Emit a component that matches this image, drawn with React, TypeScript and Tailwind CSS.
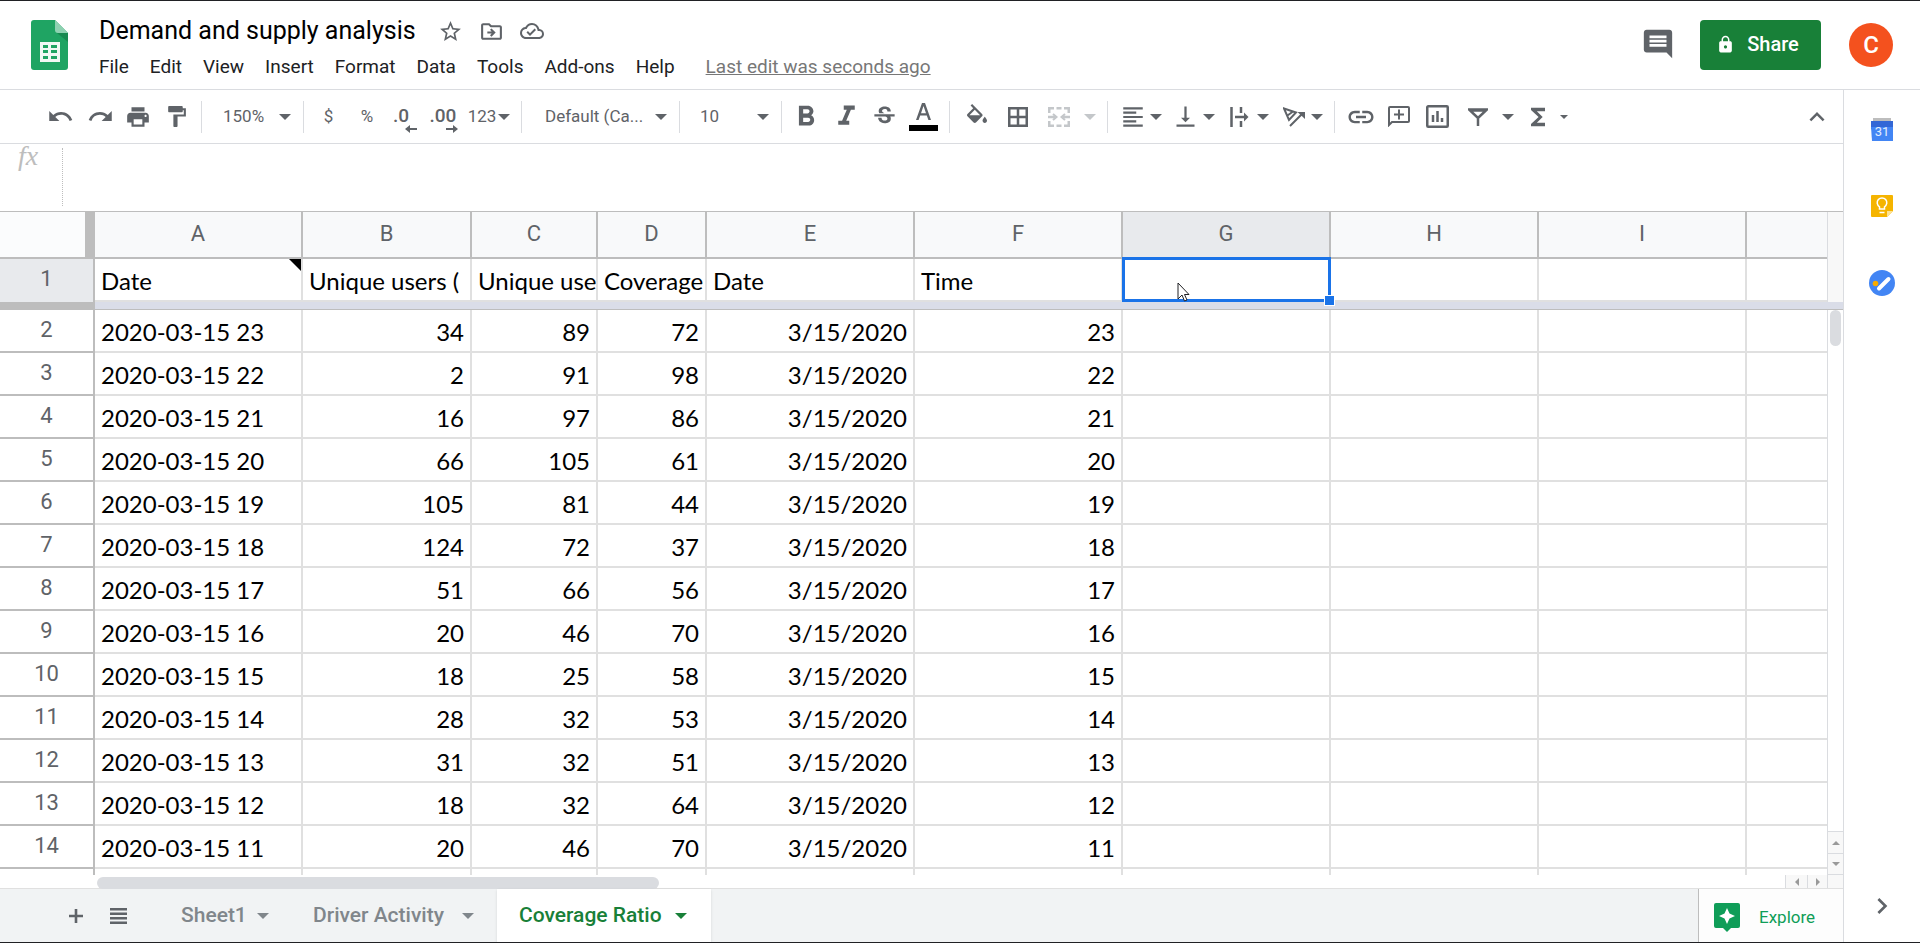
import { ReactNode } from "react";
import {
  MdChevronRight,
  MdComment,
  MdFormatAlignLeft,
  MdFormatBold,
  MdFormatItalic,
  MdFormatPaint,
  MdFunctions,
  MdKeyboardArrowUp,
  MdLink,
  MdLock,
  MdOutlineCloudDone,
  MdOutlineDriveFileMove,
  MdPrint,
  MdRedo,
  MdStarBorder,
  MdStrikethroughS,
  MdUndo,
  MdVerticalAlignBottom,
} from "react-icons/md";

const menus = ["File", "Edit", "View", "Insert", "Format", "Data", "Tools", "Add-ons", "Help"];

const columns = ["A", "B", "C", "D", "E", "F", "G", "H", "I", ""];

const headings = ["Date", "Unique users (", "Unique use", "Coverage", "Date", "Time"];

const rows = [
  ["2020-03-15 23", "34", "89", "72", "3/15/2020", "23"],
  ["2020-03-15 22", "2", "91", "98", "3/15/2020", "22"],
  ["2020-03-15 21", "16", "97", "86", "3/15/2020", "21"],
  ["2020-03-15 20", "66", "105", "61", "3/15/2020", "20"],
  ["2020-03-15 19", "105", "81", "44", "3/15/2020", "19"],
  ["2020-03-15 18", "124", "72", "37", "3/15/2020", "18"],
  ["2020-03-15 17", "51", "66", "56", "3/15/2020", "17"],
  ["2020-03-15 16", "20", "46", "70", "3/15/2020", "16"],
  ["2020-03-15 15", "18", "25", "58", "3/15/2020", "15"],
  ["2020-03-15 14", "28", "32", "53", "3/15/2020", "14"],
  ["2020-03-15 13", "31", "32", "51", "3/15/2020", "13"],
  ["2020-03-15 12", "18", "32", "64", "3/15/2020", "12"],
  ["2020-03-15 11", "20", "46", "70", "3/15/2020", "11"],
];

function Caret({ small = false }: { small?: boolean }) {
  return (
    <svg width={small ? 8 : 12} height={small ? 4 : 6} viewBox="0 0 12 6" fill="currentColor" className="shrink-0">
      <path d="M0 0h12L6 6z" />
    </svg>
  );
}

function Tool({ label, className, children }: { label: string; className: string; children: ReactNode }) {
  return (
    <button aria-label={label} className={`flex h-9 shrink-0 items-center justify-center ${className}`}>
      {children}
    </button>
  );
}

function Separator() {
  return <div className="h-8 w-px shrink-0 bg-[#dadce0]" />;
}

function Picker({ label, value, className }: { label: string; value: string; className: string }) {
  return (
    <div className={`relative flex shrink-0 items-center ${className}`}>
      <select aria-label={label} className="h-9 w-full appearance-none truncate bg-transparent text-[17px] outline-none">
        <option>{value}</option>
      </select>
      <span className="pointer-events-none absolute right-3">
        <Caret />
      </span>
    </div>
  );
}

function Header() {
  return (
    <header className="flex h-[90px] shrink-0 items-start border-t border-b border-t-[#202124] border-b-[#dadce0]">
      <svg width="37" height="50" viewBox="0 0 37 50" className="mt-[19px] ml-[31px] shrink-0">
        <path d="M3 0h21l13 13v34a3 3 0 0 1-3 3H3a3 3 0 0 1-3-3V3a3 3 0 0 1 3-3z" fill="#1fa463" />
        <path d="M24 0l13 13H27a3 3 0 0 1-3-3z" fill="#8ed1b1" />
        <path d="M26 13h11v9z" fill="#188a51" />
        <path
          d="M9 22h20v20H9zm3 3v3h5v-3zm8 0v3h6v-3zm-8 5v3h5v-3zm8 0v3h6v-3zm-8 6v3h5v-3zm8 0v3h6v-3z"
          fill="#f1f8f4"
          fillRule="evenodd"
        />
      </svg>
      <div className="ml-[31px] flex grow flex-col">
        <div className="mt-3 flex h-9 items-center text-[#5f6368]">
          <input
            aria-label="Document title"
            defaultValue="Demand and supply analysis"
            className="h-9 w-[329px] text-[25px] text-black outline-none"
          />
          <button aria-label="Star" className="ml-2.5">
            <MdStarBorder size={25} />
          </button>
          <button aria-label="Move" className="ml-4">
            <MdOutlineDriveFileMove size={25} />
          </button>
          <button aria-label="Document status" className="ml-4">
            <MdOutlineCloudDone size={24} />
          </button>
        </div>
        <nav className="mt-0.5 flex h-8 items-center gap-[21px] text-[19px] text-[#202124]">
          {menus.map((menu) => (
            <button key={menu}>{menu}</button>
          ))}
          <a href="#" className="ml-2.5 text-[#777] underline">
            Last edit was seconds ago
          </a>
        </nav>
      </div>
      <button aria-label="Comments" className="mt-[26px] text-[#5f6368]">
        <MdComment size={34} />
      </button>
      <button className="mt-[19px] ml-[25px] flex h-[50px] w-[121px] items-center justify-center gap-3 rounded bg-[#188038] pr-1.5 pb-0.5 text-xl font-medium text-white">
        <MdLock size={19} />
        Share
      </button>
      <button className="mt-[22px] mr-[27px] ml-7 size-11 rounded-full bg-[#f4511e] text-2xl font-medium text-white">
        C
      </button>
    </header>
  );
}

function Toolbar() {
  return (
    <div className="flex h-[54px] shrink-0 items-center border-b border-[#dadce0] pl-10 text-[17px] text-[#5f6368]">
      <Tool label="Undo" className="w-10"><MdUndo size={27} /></Tool>
      <Tool label="Redo" className="w-10"><MdRedo size={27} /></Tool>
      <Tool label="Print" className="w-9"><MdPrint size={26} /></Tool>
      <Tool label="Paint format" className="mr-1 w-[41px]"><MdFormatPaint size={25} /></Tool>
      <Separator />
      <Picker label="Zoom" value="150%" className="ml-[21px] w-20" />
      <Separator />
      <Tool label="Currency" className="ml-2 w-[33px]">$</Tool>
      <Tool label="Percent" className="w-11">%</Tool>
      <Tool label="Decrease decimals" className="w-8 pr-2">
        <span className="relative text-[19px] font-medium">
          .0
          <svg width="12" height="8" viewBox="0 0 12 8" fill="currentColor" className="absolute -right-2 -bottom-0.5">
            <path d="M0 4l5-4v3h7v2H5v3z" />
          </svg>
        </span>
      </Tool>
      <Tool label="Increase decimals" className="w-11">
        <span className="relative text-[19px] font-medium">
          .00
          <svg width="12" height="8" viewBox="0 0 12 8" fill="currentColor" className="absolute -right-0.5 -bottom-0.5">
            <path d="M12 4L7 0v3H0v2h7v3z" />
          </svg>
        </span>
      </Tool>
      <Tool label="More formats" className="mr-2 w-12 gap-0.5">123<Caret /></Tool>
      <Separator />
      <Picker label="Font" value="Default (Ca..." className="ml-[23px] w-[134px]" />
      <Separator />
      <Picker label="Font size" value="10" className="ml-5 w-[81px]" />
      <Separator />
      <Tool label="Bold" className="ml-1.5 w-9"><MdFormatBold size={34} /></Tool>
      <Tool label="Italic" className="w-11"><MdFormatItalic size={33} /></Tool>
      <Tool label="Strikethrough" className="w-8"><MdStrikethroughS size={27} /></Tool>
      <Tool label="Text color" className="mr-0.5 w-[47px]">
        <svg width="29" height="30" viewBox="0 0 29 30" fill="currentColor">
          <path d="M13 1h3l6 17h-2.600l-1.600-4.500h-6.600L9.600 18H7zM12 11.300h5L14.500 4z" />
          <path d="M0 23h29v6H0z" fill="#000" />
        </svg>
      </Tool>
      <Separator />
      <Tool label="Fill color" className="ml-1.5 w-[42px] pb-1.5">
        <svg width="20" height="19" viewBox="3 0 18 17" fill="currentColor">
          <path d="M16.560 8.940L7.620 0 6.210 1.410l2.380 2.380-5.150 5.150c-.59.59-.59 1.540 0 2.120l5.500 5.500c.29.29.68.44 1.060.44s.77-.15 1.060-.44l5.500-5.500c.59-.58.59-1.530 0-2.120zM5.210 10L10 5.210 14.790 10H5.210zM19 11.500s-2 2.170-2 3.500c0 1.100.9 2 2 2s2-.9 2-2c0-1.330-2-3.500-2-3.500z" />
        </svg>
      </Tool>
      <Tool label="Borders" className="w-10">
        <svg width="20" height="20" viewBox="0 0 20 20" fill="none" stroke="currentColor" strokeWidth="2.500">
          <path d="M1.250 1.250h17.500v17.500H1.250zM10 1v18M1 10h18" />
        </svg>
      </Tool>
      <Tool label="Merge cells" className="mr-0.5 w-[67px] gap-3.5 text-[#c4c7ca]">
        <svg width="22" height="20" viewBox="0 0 22 20" fill="none" stroke="currentColor" strokeWidth="2.500">
          <path d="M1.250 6V1.250H6M8.500 1.250h5M16 1.250h4.750V6M1.250 14v4.750H6M8.500 18.750h5M16 18.750h4.750V14M0 10h7M15 10h7" />
          <path d="M5 7l3.500 3L5 13M17 7l-3.500 3 3.500 3" strokeWidth="2" />
        </svg>
        <Caret />
      </Tool>
      <Separator />
      <Tool label="Horizontal align" className="ml-2.5 w-[50px] gap-2"><MdFormatAlignLeft size={26} className="-mx-1" /><Caret /></Tool>
      <Tool label="Vertical align" className="w-[54px] gap-2"><MdVerticalAlignBottom size={27} className="-mx-1" /><Caret /></Tool>
      <Tool label="Text wrapping" className="w-[54px] gap-2">
        <svg width="19" height="20" viewBox="0 0 19 20" fill="none" stroke="currentColor" strokeWidth="2.500">
          <path d="M1.500 0v20M11 0v6M11 14v6M5 10h11" />
          <path d="M14 5.500L18.500 10 14 14.500z" fill="currentColor" stroke="none" />
        </svg>
        <Caret />
      </Tool>
      <Tool label="Text rotation" className="mr-1 w-[54px] gap-1.5">
        <svg width="22" height="20" viewBox="0 0 22 20" fill="none" stroke="currentColor" strokeWidth="2">
          <path d="M1 1.500l12 4-7 7.500zM10 4.500l-5.500 4M7 19L19.500 6.500" />
          <path d="M14.500 5H22v7z" fill="currentColor" stroke="none" />
        </svg>
        <Caret />
      </Tool>
      <Separator />
      <Tool label="Insert link" className="ml-1.5 w-[39px]"><MdLink size={30} /></Tool>
      <Tool label="Insert comment" className="w-[38px]">
        <svg width="22" height="21" viewBox="0 0 22 21" fill="none" stroke="currentColor" strokeWidth="2">
          <path d="M1 19V2a1 1 0 0 1 1-1h18a1 1 0 0 1 1 1v13a1 1 0 0 1-1 1H4zM11 3.500v10M6 8.500h10" />
        </svg>
      </Tool>
      <Tool label="Insert chart" className="w-[38px]">
        <svg width="23" height="23" viewBox="0 0 23 23" fill="none" stroke="currentColor" strokeWidth="2.500">
          <path d="M2.250 1.250h18.500a1 1 0 0 1 1 1v18.500a1 1 0 0 1-1 1H2.250a1 1 0 0 1-1-1V2.250a1 1 0 0 1 1-1zM7 10v7M11.500 6v11M16 13v4" />
        </svg>
      </Tool>
      <Tool label="Filter" className="w-[70px] gap-3.5">
        <svg width="20" height="18" viewBox="0 0 20 18" fill="none" stroke="currentColor" strokeWidth="2.500">
          <path d="M1 1.500h18L10 10zM10 9v9M2 2.500h16" />
        </svg>
        <Caret />
      </Tool>
      <Tool label="Functions" className="w-[42px] gap-2.5"><MdFunctions size={28} className="-mx-0.5" /><Caret small /></Tool>
      <Tool label="Hide the menus" className="mr-2 ml-auto w-9"><MdKeyboardArrowUp size={30} /></Tool>
    </div>
  );
}

function Sheet() {
  return (
    <div className="flex min-h-0 grow border-t border-[#bdbdbd]">
      <div className="min-w-0 grow overflow-hidden">
        <table className="w-full table-fixed border-separate border-spacing-0 font-[Lato,sans-serif] text-2xl text-black">
          <colgroup>
            <col className="w-[95px]" />
            <col className="w-52" />
            <col className="w-[169px]" />
            <col className="w-[126px]" />
            <col className="w-[109px]" />
            <col className="w-52" />
            <col className="w-52" />
            <col className="w-52" />
            <col className="w-52" />
            <col className="w-52" />
            <col />
          </colgroup>
          <thead className="font-[Roboto,sans-serif] text-[22px] text-[#5f6368]">
            <tr className="h-[47px]">
              <td className="border-r-10 border-b-2 border-[#bdbdbd] bg-[#fbfcfd]" />
              {columns.map((name, index) => (
                <th
                  key={index}
                  className={`border-b-2 border-[#bdbdbd] p-0 pb-0.5 font-normal ${index < 9 ? "border-r-2" : ""} ${
                    name === "G" ? "bg-[#e8eaed]" : "bg-[#f8f9fa]"
                  }`}
                >
                  {name}
                </th>
              ))}
            </tr>
          </thead>
          <tbody>
            <tr className="h-[43px]">
              <th className="border-r-2 border-[#bdbdbd] bg-[#e8eaed] p-0 pb-1 font-[Roboto,sans-serif] text-[22px] font-normal text-[#5f6368]">
                1
              </th>
              {columns.map((name, index) => (
                <td
                  key={index}
                  className={`relative border-b-2 border-[#e0e0e0] p-0 pt-0.5 ${index < 9 ? "border-r-2" : ""}`}
                >
                  <div className="overflow-hidden pl-1.5 leading-8 whitespace-nowrap">{headings[index]}</div>
                  {name === "A" && (
                    <div className="absolute top-0 right-0 size-3 bg-black [clip-path:polygon(0_0,100%_0,100%_100%)]" />
                  )}
                  {name === "G" && (
                    <div className="absolute -top-0.5 -right-0.5 -bottom-0.5 -left-px z-10 border-3 border-[#1a73e8]">
                      <div className="absolute -right-[7px] -bottom-[7px] size-[11px] border border-white bg-[#1a73e8]" />
                      <svg width="13" height="20" viewBox="0 0 13 20" className="absolute top-[22px] left-13">
                        <path d="M1 1v16l4-4 2.500 6 2.500-1-2.500-5.500H12z" fill="#fff" stroke="#202124" />
                      </svg>
                    </div>
                  )}
                </td>
              ))}
            </tr>
            <tr className="h-2">
              <td className="bg-[#bdbdbd] p-0" />
              <td colSpan={10} className="border-b border-[#bdbdbd] bg-[#dadde8] p-0" />
            </tr>
            {rows.map((row, index) => (
              <tr key={index} className="h-[43px]">
                <th className="border-r-2 border-b-2 border-[#bdbdbd] p-0 pb-0.5 font-[Roboto,sans-serif] text-[22px] font-normal text-[#5f6368]">
                  {index + 2}
                </th>
                {columns.map((name, col) => (
                  <td
                    key={col}
                    className={`border-b-2 border-[#e0e0e0] px-1.5 pt-0.5 pb-0 leading-8 whitespace-nowrap ${
                      col < 9 ? "border-r-2" : ""
                    } ${name === "A" ? "" : "text-right"}`}
                  >
                    {row[col]}
                  </td>
                ))}
              </tr>
            ))}
            <tr className="h-[43px]">
              <th className="border-r-2 border-[#bdbdbd]" />
              {columns.map((name, col) => (
                <td key={col} className={col < 9 ? "border-r-2 border-[#e0e0e0]" : ""} />
              ))}
            </tr>
          </tbody>
        </table>
      </div>
      <div className="flex w-4 shrink-0 flex-col text-[#999]">
        <div className="h-[90px] border-l border-[#dadce0] bg-[#f8f8f8]" />
        <div className="h-2 border-b border-[#bdbdbd] bg-[#dadde8]" />
        <div className="grow border-l border-[#dadce0] px-0.5">
          <div className="h-9 rounded-full bg-[#dadce0]" />
        </div>
        <button aria-label="Scroll up" className="flex h-[22px] items-center justify-center border-t border-l border-[#dadce0] bg-[#f8f8f8]">
          <svg width="8" height="4" viewBox="0 0 8 4" fill="currentColor"><path d="M4 0l4 4H0z" /></svg>
        </button>
        <button aria-label="Scroll down" className="flex h-[22px] items-center justify-center border-y border-l border-[#dadce0] bg-[#f8f8f8]">
          <svg width="8" height="4" viewBox="0 0 8 4" fill="currentColor"><path d="M4 4L0 0h8z" /></svg>
        </button>
      </div>
    </div>
  );
}

function SheetTabs() {
  return (
    <footer className="flex h-[53px] shrink-0 items-stretch bg-[#f1f3f4] text-[21px] font-medium text-[#80868b]">
      <button aria-label="Add sheet" className="ml-[62px] flex w-7 items-center justify-center text-[#5f6368]">
        <svg width="14" height="14" viewBox="0 0 14 14" fill="currentColor">
          <path d="M5.700 0h2.600v5.700H14v2.600H8.300V14H5.700V8.300H0V5.700h5.700z" />
        </svg>
      </button>
      <button aria-label="All sheets" className="ml-3.5 flex w-7 items-center justify-center text-[#5f6368]">
        <svg width="17" height="18" viewBox="0 0 17 18" fill="currentColor">
          <path d="M0 1h17v2.500H0zM0 5.500h17V8H0zM0 10h17v2.500H0zM0 14.500h17V17H0z" />
        </svg>
      </button>
      <button className="ml-[49px] flex w-[88px] items-center justify-between">Sheet1<Caret /></button>
      <button className="ml-11 flex w-[161px] items-center justify-between">Driver Activity<Caret /></button>
      <button className="ml-[23px] flex w-[214px] items-center justify-between bg-white pr-6 pl-[22px] text-[#188038] shadow">
        Coverage Ratio<Caret />
      </button>
      <button className="ml-auto flex w-[145px] items-center border-l border-[#bdbdbd] bg-[#fdfdfd] pt-1 pl-[15px] text-[17px] font-normal text-[#0f9d58]">
        <svg width="26" height="29" viewBox="0 0 26 29">
          <path d="M2 0h22a2 2 0 0 1 2 2v21a2 2 0 0 1-2 2h-7l-4 4-4-4H2a2 2 0 0 1-2-2V2a2 2 0 0 1 2-2z" fill="#0f9d58" />
          <path d="M13 5l2.500 5.500L21 13l-5.500 2.500L13 21l-2.500-5.500L5 13l5.500-2.500z" fill="#fff" />
        </svg>
        <span className="ml-[19px]">Explore</span>
      </button>
    </footer>
  );
}

function SidePanel() {
  return (
    <aside className="flex w-[77px] shrink-0 flex-col items-center border-l border-[#dadce0] pt-7 text-[#5f6368]">
      <button aria-label="Calendar">
        <svg width="22" height="23" viewBox="0 0 22 23">
          <path d="M2 0h18v4H2z" fill="#bdbdbd" />
          <path d="M0 3h22v8H0z" fill="#3367d6" />
          <path d="M0 9h22v14H1z" fill="#4285f4" />
          <text x="11" y="18" textAnchor="middle" fontFamily="Roboto" fontSize="13" fill="#e3edfd">31</text>
        </svg>
      </button>
      <button aria-label="Keep" className="mt-[54px]">
        <svg width="22" height="22" viewBox="0 0 22 22">
          <path d="M1 0h20a1 1 0 0 1 1 1v15l-6 6H1a1 1 0 0 1-1-1V1a1 1 0 0 1 1-1z" fill="#f5b400" />
          <path d="M16 22v-6h6z" fill="#fde293" />
          <path d="M8.500 14v-2.200a4.800 4.800 0 1 1 5 0V14zM8.500 17.500h5" fill="none" stroke="#fff" strokeWidth="1.500" />
        </svg>
      </button>
      <button aria-label="Tasks" className="mt-[53px]">
        <svg width="26" height="26" viewBox="0 0 26 26">
          <circle cx="13" cy="13" r="13" fill="#4285f4" />
          <path d="M10 18.500L19.500 9" stroke="#fff" strokeWidth="4" strokeLinecap="round" />
          <circle cx="6.500" cy="13.500" r="2.800" fill="#f9ab00" />
        </svg>
      </button>
      <button aria-label="Show side panel" className="mt-auto mb-5">
        <MdChevronRight size={32} />
      </button>
    </aside>
  );
}

export default function App() {
  return (
    <div className="flex h-screen flex-col overflow-hidden border-b border-[#202124] bg-white font-[Roboto,sans-serif]">
      <Header />
      <div className="flex min-h-0 grow">
        <main className="flex min-w-0 grow flex-col">
          <Toolbar />
          <div className="flex h-[67px] shrink-0 items-start">
            <label htmlFor="formula" className="w-[62px] pl-[18px] font-['Liberation_Serif',serif] text-[28px] leading-6 text-[#bdbdbd] italic">
              fx
            </label>
            <input id="formula" className="mt-1 h-[58px] grow border-l border-dotted border-[#bdbdbd] px-2 outline-none" />
          </div>
          <Sheet />
          <div className="flex h-3.5 shrink-0 border-b border-[#e0e0e0] pl-[97px] text-[#999]">
            <div className="mt-0.5 h-3 w-[562px] rounded-full bg-[#dadce0]" />
            <button aria-label="Scroll left" className="ml-auto flex w-[22px] items-center justify-center border-l border-[#dadce0] bg-[#f8f8f8]">
              <svg width="4" height="8" viewBox="0 0 4 8" fill="currentColor"><path d="M0 4l4-4v8z" /></svg>
            </button>
            <button aria-label="Scroll right" className="flex w-[21px] items-center justify-center border-x border-[#dadce0] bg-[#f8f8f8]">
              <svg width="4" height="8" viewBox="0 0 4 8" fill="currentColor"><path d="M4 4L0 0v8z" /></svg>
            </button>
            <div className="w-[15px] bg-[#f8f8f8]" />
          </div>
          <SheetTabs />
        </main>
        <SidePanel />
      </div>
    </div>
  );
}
